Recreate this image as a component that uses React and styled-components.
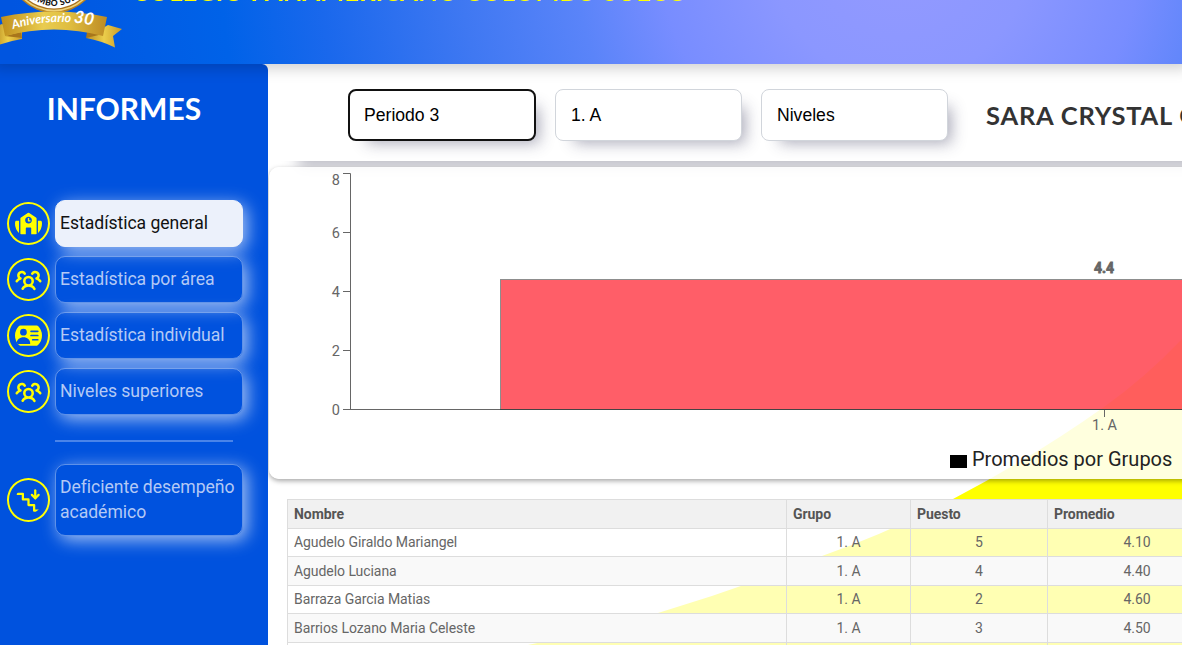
import React from 'react';
import styled, { createGlobalStyle, css } from 'styled-components';
import { FaSchool } from 'react-icons/fa';
import { BsPersonVcardFill } from 'react-icons/bs';
import { PiUsersThreeBold } from 'react-icons/pi';
import { TbStairsDown } from 'react-icons/tb';

const GlobalStyle = createGlobalStyle`
  * { box-sizing: border-box; }
  body { margin: 0; background: #fff; font-family: Roboto, sans-serif; overflow: hidden; }
`;

const Page = styled.div`
  width: 1182px;
  height: 645px;
  overflow: hidden;
  display: flex;
  flex-direction: column;
  position: relative;
`;

const Header = styled.header`
  height: 64px;
  flex: none;
  position: relative;
  z-index: 3;
  display: flex;
  align-items: flex-start;
  background: radial-gradient(circle at 900px -50px, #949aff 0, #8b97ff 130px, #788dff 240px, #5a84f9 325px, #3f78f2 440px, #1a68ec 580px, #0062e8 680px, #0055e0 890px);
  box-shadow: 0 -3px 14px 7px rgba(0, 0, 0, 0.2);
`;

const Logo = styled.svg`
  display: block;
  width: 132px;
  height: 52px;
  flex: none;
`;

const SchoolName = styled.h1`
  margin: -24px 0 0;
  font: 700 25.2px/30px Lato, sans-serif;
  letter-spacing: 0.28px;
  white-space: nowrap;
  color: #ff0;
`;

const Body = styled.div`
  flex: 1;
  display: flex;
  min-height: 0;
`;

const Sidebar = styled.aside`
  width: 268px;
  flex: none;
  padding: 25px 0 0 7px;
  background: #0052de;
  border-top-right-radius: 6px;
`;

const SidebarTitle = styled.h2`
  margin: 0 27px 0 0;
  height: 111px;
  font: 700 30px/38px Lato, sans-serif;
  text-align: center;
  color: #fff;
`;

const MenuItem = styled.div`
  display: flex;
  align-items: center;
  gap: 5px;
  height: ${(p) => (p.$tall ? 72 : 47)}px;
  margin-bottom: 9px;
`;

const IconRing = styled.span`
  width: 43px;
  height: 43.5px;
  flex: none;
  border: 2px solid #ff0;
  border-radius: 50%;
  display: grid;
  place-items: center;
  color: #ff0;
  svg { display: block; width: 27px; height: 27px; border-radius: 50%; }
`;

const MenuButton = styled.button`
  width: 188px;
  height: 100%;
  padding: 0 4px 1px;
  text-align: left;
  border: 1px solid rgba(236, 241, 251, 0.4);
  border-radius: 10px;
  background: transparent;
  color: #b4c9f5;
  font: 400 17.6px/25px Roboto, sans-serif;
  letter-spacing: -0.04px;
  white-space: nowrap;
  box-shadow: 4px 4px 17px rgba(255, 255, 255, 0.65);
  ${(p) => p.$active && css`
    background: #ecf1fb;
    border-color: #ecf1fb;
    color: #111;
  `}
`;

const Divider = styled.hr`
  width: 178px;
  height: 2px;
  margin: 25px 0 22px 48px;
  border: 0;
  background: #4a84e9;
`;

const Main = styled.main`
  flex: 1;
  min-width: 0;
  position: relative;
  background: #fff;
  overflow: hidden;
`;

const Blob = styled.svg`
  position: absolute;
  inset: 0;
  width: 914px;
  height: 581px;
`;

const Filters = styled.section`
  position: relative;
  height: 97px;
  padding: 25px 0 0 80px;
  display: flex;
  gap: 19px;
  background: #fff;
  white-space: nowrap;
  box-shadow: 28px 8px 14px -2px rgba(50, 50, 80, 0.34);
`;

const Select = styled.div`
  width: 187px;
  height: 52px;
  flex: none;
  padding-left: 15px;
  border: 1px solid #d1d5db;
  border-radius: 8px;
  background: #fff;
  font: 400 17.6px/50px "Liberation Sans", sans-serif;
  color: #000;
  box-shadow: 11px 10px 15px -8px rgba(50, 50, 85, 0.42);
  ${(p) => p.$focused && css`
    width: 188px;
    padding-left: 14px;
    border: 2px solid #111;
    line-height: 48px;
  `}
`;

const Student = styled.h3`
  margin: 9px 0 0 19px;
  font: 700 25.5px/34px Lato, sans-serif;
  letter-spacing: 0.8px;
  color: #333;
`;

const ChartCard = styled.section`
  position: relative;
  margin: 6px 0 0 1px;
  height: 312px;
  width: 960px;
  border-radius: 10px;
  background: rgba(255, 255, 255, 0.87);
  box-shadow: 0 2px 5px rgba(0, 0, 0, 0.35);
  svg { display: block; }
`;

const Table = styled.table`
  position: relative;
  margin: 20px 0 0 19px;
  width: 940px;
  table-layout: fixed;
  border-collapse: collapse;
  font-size: 14px;
  letter-spacing: -0.06px;
  color: #666;
`;

const Row = styled.tr`
  height: ${(p) => (p.$odd ? 28 : 29)}px;
  background: ${(p) => (p.$odd ? 'rgba(255,255,255,0.7)' : '#f9f9f9')};
  td { padding-bottom: ${(p) => (p.$odd ? 2 : 0)}px; }
`;

const HeadCell = styled.th`
  height: 29px;
  padding: 0 6px;
  border: 1px solid #ddd;
  background: #f1f1f1;
  color: #555;
  text-align: left;
  font-weight: 700;
`;

const Cell = styled.td`
  padding: 0 6px;
  border: 1px solid #ddd;
  text-align: ${(p) => (p.$center ? 'center' : 'left')};
`;

const students = [
  ['Agudelo Giraldo Mariangel', '1. A', '5', '4.10'],
  ['Agudelo Luciana', '1. A', '4', '4.40'],
  ['Barraza Garcia Matias', '1. A', '2', '4.60'],
  ['Barrios Lozano Maria Celeste', '1. A', '3', '4.50'],
  ['', '', '', ''],
];

const Anniversary = () => (
  <Logo viewBox="0 0 132 52">
    <defs>
      <linearGradient id="gold" x1="0" x2="1">
        <stop offset="0" stopColor="#c08f1c" />
        <stop offset=".4" stopColor="#e9cc50" />
        <stop offset=".65" stopColor="#dfbd40" />
        <stop offset="1" stopColor="#bd8b24" />
      </linearGradient>
      <linearGradient id="tail" x1="0" x2="1">
        <stop offset="0" stopColor="#b98c20" />
        <stop offset=".5" stopColor="#ecce4b" />
        <stop offset="1" stopColor="#c99a28" />
      </linearGradient>
      <path id="arc" d="M20 -11 Q54 23 88 -11" />
      <path id="ribbon" d="M13 29 Q54 16 100 27" />
    </defs>
    <circle cx="54" cy="-33" r="46" fill="#b98221" />
    <circle cx="54" cy="-33" r="44.500" fill="#efd37a" />
    <circle cx="54" cy="-33" r="42.800" fill="#a8701c" />
    <circle cx="54" cy="-33" r="41.500" fill="#fff" />
    <text fontFamily="Lato, sans-serif" fontWeight="900" fontSize="8.500" letterSpacing=".5" fill="#111">
      <textPath href="#arc" startOffset="50%" textAnchor="middle">LOMBO SUEC</textPath>
    </text>
    <path d="M-6 27 L2 24 L22 32 L22 39 Q9 41 -4 46 Z" fill="url(#tail)" />
    <path d="M86 38 L108 25 L122 29 L113 36 L115 47.500 Q102 41 86 38Z" fill="url(#tail)" />
    <path d="M5 36 L21 32 L22 38Z M103 34 L87 32 L86 38Z" fill="#a8761b" />
    <path d="M1 17 Q54 6 107 17 L103 36 Q54 23 5 36Z" fill="url(#gold)" />
    <text fontFamily="Lato, sans-serif" fontStyle="italic" fontWeight="700" fill="#fff" fontSize="12.200">
      <textPath href="#ribbon">
        Aniversario <tspan fontSize="17">30</tspan>
      </textPath>
    </text>
  </Logo>
);

const ticks = [[8, 179], [6, 232], [4, 291], [2, 350], [0, 409]];

const Chart = () => (
  <svg width="913" height="312" viewBox="269 167 913 312" fontFamily="Roboto, sans-serif">
    <rect x="500.500" y="279.500" width="1207" height="130" fill="rgba(255,0,16,0.63)" stroke="#8d8d8d" />
    <path d="M343 173.500H350.500V409.500M343 409.500H1182M343 232.500h7M343 291.500h7M343 350.500h7M1104.500 410v7" fill="none" stroke="#666" />
    <path d="M500 409.500H1182" stroke="#444" />
    {ticks.map(([value, y]) => (
      <text key={value} x="340" y={y + 5.500} textAnchor="end" fontSize="14.500" fill="#666">{value}</text>
    ))}
    <text x="1104.500" y="430" textAnchor="middle" fontSize="14.500" fill="#666">1. A</text>
    <text x="1104" y="273" textAnchor="middle" fontSize="14" fontWeight="700" fill="#666" stroke="#666" strokeWidth=".8">4.4</text>
    <rect x="950" y="455" width="17" height="13" />
    <text x="972" y="466" fontSize="20" fill="#222">Promedios por Grupos</text>
  </svg>
);

export default function App() {
  return (
    <>
      <GlobalStyle />
      <Page>
        <Header>
          <Anniversary />
          <SchoolName>COLEGIO PANAMERICANO COLOMBO SUECO</SchoolName>
        </Header>
        <Body>
          <Sidebar>
            <SidebarTitle>INFORMES</SidebarTitle>
            <MenuItem>
              <IconRing><FaSchool /></IconRing>
              <MenuButton $active>Estadística general</MenuButton>
            </MenuItem>
            <MenuItem>
              <IconRing><PiUsersThreeBold /></IconRing>
              <MenuButton>Estadística por área</MenuButton>
            </MenuItem>
            <MenuItem>
              <IconRing><BsPersonVcardFill /></IconRing>
              <MenuButton>Estadística individual</MenuButton>
            </MenuItem>
            <MenuItem>
              <IconRing><PiUsersThreeBold /></IconRing>
              <MenuButton>Niveles superiores</MenuButton>
            </MenuItem>
            <Divider />
            <MenuItem $tall>
              <IconRing><TbStairsDown /></IconRing>
              <MenuButton>Deficiente desempeño<br />académico</MenuButton>
            </MenuItem>
          </Sidebar>
          <Main>
            <Blob viewBox="268 64 914 581">
              <path d="M1182 339 Q1146 377 1104 407 Q1032 458 953 499 Q890 532 822 556 Q742 588 658 613 Q596 631 528 645 H1182Z" fill="#ff0" />
            </Blob>
            <Filters>
              <Select $focused>Periodo 3</Select>
              <Select>1. A</Select>
              <Select>Niveles</Select>
              <Student>SARA CRYSTAL GARCIA</Student>
            </Filters>
            <ChartCard><Chart /></ChartCard>
            <Table>
              <colgroup>
                <col style={{ width: 499 }} />
                <col style={{ width: 124 }} />
                <col style={{ width: 137 }} />
                <col />
              </colgroup>
              <thead>
                <tr>
                  {['Nombre', 'Grupo', 'Puesto', 'Promedio'].map((h) => <HeadCell key={h}>{h}</HeadCell>)}
                </tr>
              </thead>
              <tbody>
                {students.map(([name, group, rank, average], i) => (
                  <Row key={i} $odd={i % 2 === 0}>
                    <Cell>{name}</Cell>
                    <Cell $center>{group}</Cell>
                    <Cell $center>{rank}</Cell>
                    <Cell $center>{average}</Cell>
                  </Row>
                ))}
              </tbody>
            </Table>
          </Main>
        </Body>
      </Page>
    </>
  );
}
